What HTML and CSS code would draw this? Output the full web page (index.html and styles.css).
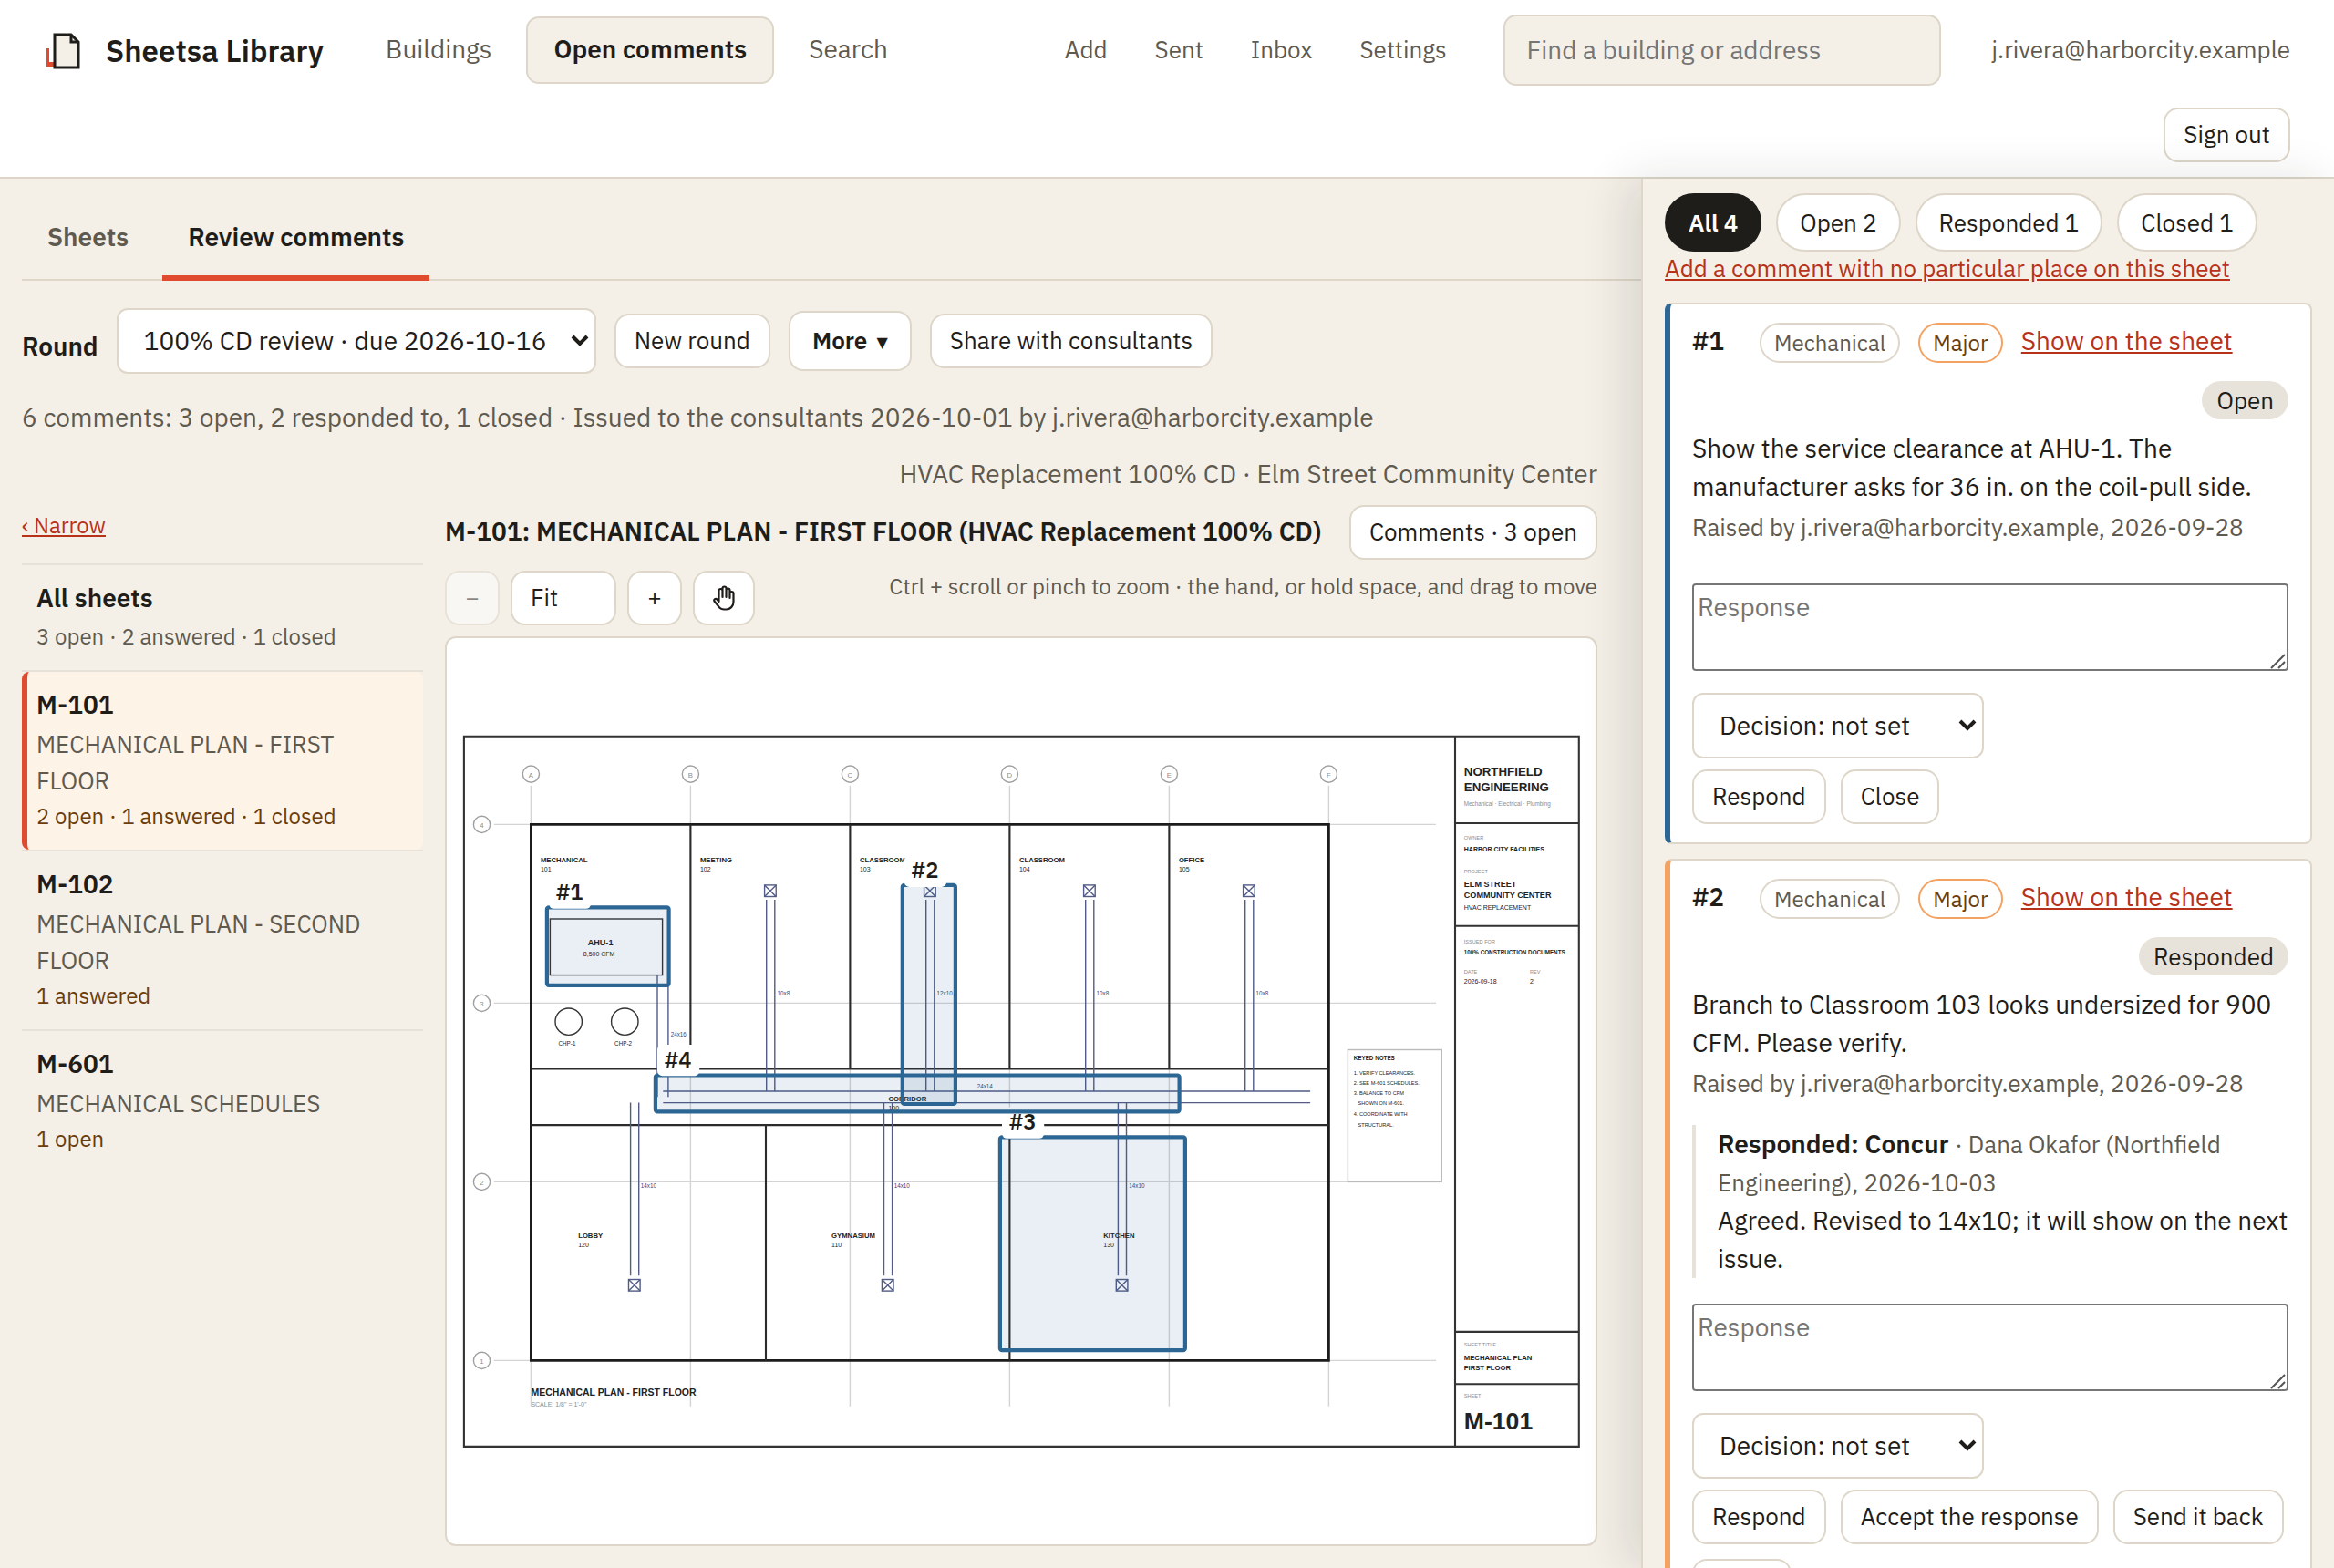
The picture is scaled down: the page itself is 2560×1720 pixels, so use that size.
FILE: index.html
```html
<!DOCTYPE html>
<html lang="en">
<head>
<meta charset="utf-8">
<title>Sheetsa Library</title>
<link rel="stylesheet" href="styles.css">
</head>
<body>
<header class="topbar">
  <a class="brand" href="#">
    <svg class="brand-mark" viewBox="0 0 40 44" width="40" height="44" aria-hidden="true">
      <path d="M3 19h10v20H3z" fill="#e04a2e"/><path d="M6 19h7v15H6z" fill="#fff"/>
      <path d="M12 4h18l8 8v28H12z" fill="#f4f0e8" stroke="#1f1d1a" stroke-width="3"/>
      <path d="M30 4v8h8" fill="none" stroke="#1f1d1a" stroke-width="3"/>
    </svg>
    Sheetsa Library
  </a>
  <nav class="nav" aria-label="Main">
    <a href="#">Buildings</a>
    <a href="#" class="current">Open comments</a>
    <a href="#">Search</a>
  </nav>
  <nav class="subnav" aria-label="Tools">
    <a href="#">Add</a><a href="#">Sent</a><a href="#">Inbox</a><a href="#">Settings</a>
  </nav>
  <input class="search" type="search" placeholder="Find a building or address" aria-label="Find a building or address">
  <div class="account">
    <span class="email">j.rivera@harborcity.example</span>
    <button class="btn">Sign out</button>
  </div>
</header>

<div class="page">
  <main class="main">
    <nav class="tabs" aria-label="Sections">
      <a href="#">Sheets</a>
      <a href="#" class="current">Review comments</a>
    </nav>
    <div class="round">
      <label for="round">Round</label>
      <select id="round" class="select round-select"><option>100% CD review · due 2026-10-16</option></select>
      <button class="btn">New round</button>
      <button class="btn more">More <span class="tri">▼</span></button>
      <button class="btn">Share with consultants</button>
    </div>
    <p class="status">6 comments: 3 open, 2 responded to, 1 closed · Issued to the consultants 2026-10-01 by j.rivera@harborcity.example</p>
    <p class="project">HVAC Replacement 100% CD · Elm Street Community Center</p>
    <div class="work">
      <aside class="sheets">
        <a class="narrow" href="#">‹ Narrow</a>
        <ul class="sheet-list">
          <li><a href="#"><b>All sheets</b><small class="muted">3 open · 2 answered · 1 closed</small></a></li>
          <li><a href="#" class="active"><b>M-101</b><span>MECHANICAL PLAN - FIRST FLOOR</span><small>2 open · 1 answered · 1 closed</small></a></li>
          <li><a href="#"><b>M-102</b><span>MECHANICAL PLAN - SECOND FLOOR</span><small>1 answered</small></a></li>
          <li><a href="#"><b>M-601</b><span>MECHANICAL SCHEDULES</span><small>1 open</small></a></li>
        </ul>
      </aside>
      <section class="viewer">
        <div class="viewer-head">
          <h1>M-101: MECHANICAL PLAN - FIRST FLOOR (HVAC Replacement 100% CD)</h1>
          <button class="btn">Comments · 3 open</button>
        </div>
        <div class="tools">
          <button class="btn square" disabled aria-label="Zoom out">−</button>
          <button class="btn fit">Fit</button>
          <button class="btn square" aria-label="Zoom in">+</button>
          <button class="btn hand" aria-label="Move the sheet">
            <svg viewBox="0 0 24 28" width="24" height="28" fill="none" stroke="currentColor" stroke-width="2.200" stroke-linecap="round" stroke-linejoin="round"><path d="M6.500 15V6a2 2 0 0 1 4 0V13M10.500 13V3.500a2 2 0 0 1 4 0V13M14.500 13V5.500a2 2 0 0 1 4 0V14M18.500 11V9a2 2 0 0 1 4 0V18c0 5-3.500 8.500-8 8.500h-2c-3 0-5-1-6.500-3.500L1.500 17.500c-1-2 1.500-3.500 3-2L6.500 18V6"/></svg>
          </button>
          <p class="hint">Ctrl + scroll or pinch to zoom · the hand, or hold space, and drag to move</p>
        </div>
        <div class="canvas">
          <svg class="plan" viewBox="0 0 1800 1420" role="img" aria-label="Mechanical plan, first floor">
            <defs>
              <g id="diffuser"><rect x="-9" y="-9" width="18" height="18"/><path d="M-9-9L9 9M9-9L-9 9"/></g>
            </defs>
            <g class="frame">
              <path d="M27 154H1774V1267H27zM1580 154V1267M1580 290H1774M1580 451H1774M1580 1087H1774M1580 1169H1774"/>
            </g>
            <g class="grid">
              <path d="M132 231V1204M382 231V1204M632 231V1204M882 231V1204M1132 231V1204M1382 231V1204M74 292H1550M74 572H1550M74 852H1550M74 1132H1550"/>
              <g class="bubble">
                <circle cx="132" cy="213" r="13"/><circle cx="382" cy="213" r="13"/><circle cx="632" cy="213" r="13"/><circle cx="882" cy="213" r="13"/><circle cx="1132" cy="213" r="13"/><circle cx="1382" cy="213" r="13"/>
                <circle cx="55" cy="292" r="13"/><circle cx="55" cy="572" r="13"/><circle cx="55" cy="852" r="13"/><circle cx="55" cy="1132" r="13"/>
              </g>
            </g>
            <g class="t11 soft mid">
              <text x="132" y="218">A</text><text x="382" y="218">B</text><text x="632" y="218">C</text><text x="882" y="218">D</text><text x="1132" y="218">E</text><text x="1382" y="218">F</text>
              <text x="55" y="297">4</text><text x="55" y="577">3</text><text x="55" y="857">2</text><text x="55" y="1137">1</text>
            </g>
            <path class="shell" d="M132 292H1382V1132H132z"/>
            <path class="wall" d="M382 292V675M632 292V675M882 292V675M1132 292V675M132 675H1382M132 763H1382M500 763V1132M882 763V1132"/>
            <g class="keybox"><rect x="1412" y="645" width="147" height="207"/></g>
            <g class="equip"><rect x="162" y="440" width="176" height="88"/><circle cx="191" cy="601" r="21"/><circle cx="279" cy="601" r="21"/></g>
            <g class="duct">
              <path d="M330 528V719M347 528V719M339 710H1353M339 728H1353M501 410V710M514 410V710M751 410V710M764 410V710M1001 410V710M1014 410V710M1251 410V710M1264 410V710M288 728V999M301 728V999M685 728V999M698 728V999M1052 728V999M1065 728V999"/>
              <use href="#diffuser" x="507" y="396"/><use href="#diffuser" x="757" y="396"/><use href="#diffuser" x="1007" y="396"/><use href="#diffuser" x="1257" y="396"/>
              <use href="#diffuser" x="294" y="1014"/><use href="#diffuser" x="691" y="1014"/><use href="#diffuser" x="1058" y="1014"/>
            </g>
            <g class="t9 navy">
              <text x="518" y="560">10x8</text><text x="768" y="560">12x10</text><text x="1018" y="560">10x8</text><text x="1268" y="560">10x8</text>
              <text x="831" y="706">24x14</text><text x="351" y="624">24x16</text>
              <text x="304" y="862">14x10</text><text x="701" y="862">14x10</text><text x="1069" y="862">14x10</text>
            </g>
            <g class="t11 bold">
              <text x="147" y="352">MECHANICAL</text><text x="397" y="352">MEETING</text><text x="647" y="352">CLASSROOM</text><text x="897" y="352">CLASSROOM</text><text x="1147" y="352">OFFICE</text>
              <text x="692" y="725">CORRIDOR</text><text x="206" y="940">LOBBY</text><text x="603" y="940">GYMNASIUM</text><text x="1029" y="940">KITCHEN</text>
              <text x="1594" y="1131">MECHANICAL PLAN</text><text x="1594" y="1147">FIRST FLOOR</text>
            </g>
            <g class="t10">
              <text x="147" y="366">101</text><text x="397" y="366">102</text><text x="647" y="366">103</text><text x="897" y="366">104</text><text x="1147" y="366">105</text>
              <text x="692" y="740">100</text><text x="206" y="954">120</text><text x="603" y="954">110</text><text x="1029" y="954">130</text>
              <text x="214" y="499">8,500 CFM</text><text x="1594" y="425">HVAC REPLACEMENT</text><text x="1594" y="541">2026-09-18</text><text x="1697" y="541">2</text>
              <text class="soft" x="132" y="1204">SCALE: 1/8" = 1'-0"</text>
            </g>
            <g class="t10 bold"><text x="1594" y="334">HARBOR CITY FACILITIES</text></g>
            <g class="t9"><text x="175" y="639">CHP-1</text><text x="263" y="639">CHP-2</text></g>
            <g class="t9 soft"><text x="1594" y="263">Mechanical · Electrical · Plumbing</text></g>
            <g class="t9 bold"><text x="1594" y="496">100% CONSTRUCTION DOCUMENTS</text><text x="1421" y="662">KEYED NOTES</text></g>
            <g class="t13 bold"><text x="221" y="481">AHU-1</text><text x="1594" y="390">ELM STREET</text><text x="1594" y="407">COMMUNITY CENTER</text></g>
            <g class="t8 soft"><text x="1594" y="316">OWNER</text><text x="1594" y="369">PROJECT</text><text x="1594" y="478">ISSUED FOR</text><text x="1594" y="525">DATE</text><text x="1697" y="525">REV</text><text x="1594" y="1110">SHEET TITLE</text><text x="1594" y="1190">SHEET</text></g>
            <g class="t8">
              <text x="1421" y="684">1. VERIFY CLEARANCES.</text><text x="1421" y="700">2. SEE M-601 SCHEDULES.</text><text x="1421" y="716">3. BALANCE TO CFM</text><text x="1428" y="732">SHOWN ON M-601.</text><text x="1421" y="749">4. COORDINATE WITH</text><text x="1428" y="765">STRUCTURAL.</text>
            </g>
            <g class="t15 bold"><text x="132" y="1187">MECHANICAL PLAN - FIRST FLOOR</text></g>
            <g class="t19 bold"><text x="1594" y="216">NORTHFIELD</text><text x="1594" y="240">ENGINEERING</text></g>
            <g class="t38 bold"><text x="1594" y="1240">M-101</text></g>
            <g class="mark"><rect class="area" x="157" y="422" width="191" height="122" rx="3"/><rect class="tag" x="160" y="375" width="66" height="49" rx="8"/><text x="171" y="410">#1</text></g>
            <g class="mark"><rect class="area" x="714" y="387" width="83" height="343" rx="3"/><rect class="tag" x="717" y="341" width="66" height="49" rx="8"/><text x="728" y="376">#2</text></g>
            <g class="mark"><rect class="area" x="867" y="782" width="290" height="334" rx="3"/><rect class="tag" x="870" y="735" width="66" height="49" rx="8"/><text x="881" y="770">#3</text></g>
            <g class="mark"><rect class="area" x="327" y="685" width="821" height="57" rx="3"/><rect class="tag" x="330" y="637" width="66" height="49" rx="8"/><text x="341" y="673">#4</text></g>
          </svg>
        </div>
      </section>
    </div>
  </main>

  <aside class="panel" aria-label="Comments">
    <div class="chips">
      <button class="chip on">All 4</button><button class="chip">Open 2</button><button class="chip">Responded 1</button><button class="chip">Closed 1</button>
    </div>
    <a class="add" href="#">Add a comment with no particular place on this sheet</a>
    <article class="card open">
      <div class="card-head"><b>#1</b><span class="pill">Mechanical</span><span class="pill major">Major</span><a href="#">Show on the sheet</a></div>
      <span class="state">Open</span>
      <p class="text">Show the service clearance at AHU-1. The manufacturer asks for 36 in. on the coil-pull side.</p>
      <p class="by">Raised by j.rivera@harborcity.example, 2026-09-28</p>
      <textarea placeholder="Response" aria-label="Response to #1"></textarea>
      <select class="select" aria-label="Decision for #1"><option>Decision: not set</option></select>
      <div class="actions"><button class="btn">Respond</button><button class="btn">Close</button></div>
    </article>
    <article class="card responded">
      <div class="card-head"><b>#2</b><span class="pill">Mechanical</span><span class="pill major">Major</span><a href="#">Show on the sheet</a></div>
      <span class="state">Responded</span>
      <p class="text">Branch to Classroom 103 looks undersized for 900 CFM. Please verify.</p>
      <p class="by">Raised by j.rivera@harborcity.example, 2026-09-28</p>
      <blockquote><b>Responded: Concur</b> <span>· Dana Okafor (Northfield Engineering), 2026-10-03</span><br>Agreed. Revised to 14x10; it will show on the next issue.</blockquote>
      <textarea placeholder="Response" aria-label="Response to #2"></textarea>
      <select class="select" aria-label="Decision for #2"><option>Decision: not set</option></select>
      <div class="actions"><button class="btn">Respond</button><button class="btn">Accept the response</button><button class="btn">Send it back</button><button class="btn">Close</button></div>
    </article>
  </aside>
</div>
</body>
</html>
```
FILE: styles.css
```css
:root {
  --ink: #1f1d1a;
  --muted: #5f5a50;
  --paper: #f4f0e8;
  --line: #ddd6c9;
  --red: #b8321a;
  --accent: #e04a2e;
  --blue: #2c6694;
  --orange: #f4a261;
  --brown: #6b3d0c;
}
* { box-sizing: border-box; }
html, body { height: 100%; }
body {
  margin: 0;
  display: flex;
  flex-direction: column;
  overflow: hidden;
  background: var(--paper);
  color: var(--ink);
  font: 28px/42px "IBM Plex Sans", Roboto, "Noto Sans", sans-serif;
}
p, h1, ul, blockquote { margin: 0; padding: 0; }
b, h1, label { font-weight: 600; }
a { color: var(--red); }
button, input, select, textarea { font: inherit; color: inherit; }

.topbar {
  display: flex;
  flex: none;
  align-items: flex-start;
  padding: 16px 48px;
  background: #fff;
  border-bottom: 2px solid var(--line);
}
.topbar a { color: var(--muted); text-decoration: none; }
.topbar .brand {
  display: flex;
  align-items: center;
  gap: 28px;
  height: 80px;
  margin-right: 38px;
  color: var(--ink);
  font-size: 33px;
  font-weight: 600;
}
.nav { display: flex; gap: 8px; padding-top: 2px; }
.nav a { padding: 13px 28px 15px; border: 2px solid transparent; border-radius: 14px; }
.nav .current { color: var(--ink); font-weight: 600; background: var(--paper); border-color: var(--line); }
.subnav { display: flex; gap: 52px; margin: 17px 62px 0 auto; font-size: 26px; }
.search {
  width: 480px;
  height: 78px;
  padding: 0 24px 2px;
  background: var(--paper);
  border: 2px solid var(--line);
  border-radius: 14px;
}
.search::placeholder, textarea::placeholder { color: #757575; }
.account { display: flex; flex-direction: column; align-items: flex-end; gap: 26px; margin-left: 56px; font-size: 26px; }
.email { color: var(--muted); line-height: 76px; }

.btn {
  height: 60px;
  padding: 0 20px 3px;
  background: #fff;
  border: 2px solid var(--line);
  border-radius: 16px;
  font-size: 26px;
  line-height: 40px;
  white-space: nowrap;
}
.btn:disabled { opacity: .5; }
.select {
  display: block;
  width: 320px;
  height: 72px;
  padding: 0 0 1px 28px;
  appearance: none;
  background: #fff url("data:image/svg+xml,%3Csvg xmlns='http://www.w3.org/2000/svg' width='20' height='14' fill='none' stroke='%231f1d1a' stroke-width='4'%3E%3Cpath d='M2 2l8 8 8-8'/%3E%3C/svg%3E") no-repeat right 6px center;
  border: 2px solid var(--line);
  border-radius: 12px;
}

.page { display: flex; flex: 1; min-height: 0; }
.main { display: flex; flex: 1; flex-direction: column; min-width: 0; padding-left: 24px; }
.tabs { display: flex; gap: 9px; padding-top: 22px; border-bottom: 2px solid var(--line); }
.tabs a { padding: 21px 28px; margin-bottom: -2px; border-bottom: 6px solid transparent; color: var(--muted); font-weight: 600; text-decoration: none; }
.tabs .current { color: var(--ink); border-color: var(--accent); }
.round { display: flex; align-items: center; gap: 20px; padding-top: 30px; }
.round label { padding-top: 12px; }
.round-select { width: 526px; }
.more { height: 66px; padding: 0 24px 3px; font-weight: 600; }
.tri { margin-left: 4px; font-family: "DejaVu Sans", sans-serif; font-size: 16px; line-height: 20px; vertical-align: 2px; }
.status { padding-top: 27px; color: var(--muted); }
.project { padding: 20px 48px 0 0; color: var(--muted); text-align: right; }

.work { display: flex; flex: 1; gap: 24px; min-height: 0; padding: 13px 48px 24px 0; }
.sheets { flex: none; width: 440px; padding-top: 4px; font-size: 24px; line-height: 36px; }
.sheet-list { margin-top: 24px; list-style: none; }
.sheet-list li { border-top: 2px solid #e6e2da; }
.sheet-list a { display: flex; flex-direction: column; padding: 13px 16px 18px; color: var(--ink); text-decoration: none; }
.sheet-list b { font-size: 28px; line-height: 46px; }
.sheet-list span { font-size: 26px; line-height: 40px; color: var(--muted); }
.sheet-list small { font-size: 24px; line-height: 38px; color: var(--brown); }
.sheet-list .muted { color: var(--muted); }
.sheet-list .active { padding-left: 10px; background: #fef3e7; border-left: 6px solid var(--accent); border-radius: 8px; }

.viewer { display: flex; flex: 1; flex-direction: column; gap: 12px; min-width: 0; }
.viewer-head { display: flex; justify-content: space-between; align-items: center; }
.viewer h1 { padding-bottom: 3px; font-size: 28px; white-space: nowrap; }
.tools { display: flex; gap: 12px; }
.square { width: 60px; padding: 0 0 3px; }
.fit { width: 116px; text-align: left; }
.hand { display: grid; place-items: center; width: 68px; padding: 0; }
.hint { margin-left: auto; font-size: 24px; line-height: 34px; color: var(--muted); }
.canvas { display: flex; flex: 1; min-height: 0; background: #fff; border: 2px solid var(--line); border-radius: 12px; overflow: hidden; }
.plan { width: 100%; height: 100%; font-family: "Liberation Sans", sans-serif; fill: #222; }
.plan path, .plan .grid circle, .plan .equip *, .plan .keybox rect, #diffuser rect { fill: none; }
.frame { stroke: #333; stroke-width: 3; }
.grid { stroke: #d4d4d4; stroke-width: 2; }
.bubble { stroke: #a0a0a0; }
.shell { stroke: #1c1c1c; stroke-width: 4; }
.wall { stroke: #2b2b2b; stroke-width: 3; }
.keybox { stroke: #bbb; stroke-width: 2; }
.equip { stroke: #333; stroke-width: 2; }
.duct { stroke: #525c86; stroke-width: 2; }
.navy { fill: #3a4678; }
.soft { fill: #8c8c8c; }
.mid { text-anchor: middle; }
.bold { font-weight: 700; }
.t8 { font-size: 8px; }
.t9 { font-size: 9px; }
.t10 { font-size: 10px; }
.t11 { font-size: 11px; }
.t13 { font-size: 13px; }
.t15 { font-size: 15px; }
.t19 { font-size: 19px; }
.t38 { font-size: 38px; }
.area { fill: rgb(44 102 148 / 10%); stroke: var(--blue); stroke-width: 6; }
.tag { fill: #fff; }
.mark text { font: 600 34px "IBM Plex Sans", Roboto, sans-serif; fill: var(--ink); }

.panel {
  flex: none;
  width: 760px;
  padding: 16px 24px 0;
  background: var(--paper);
  border-left: 2px solid var(--line);
  box-shadow: -16px 0 48px rgb(31 29 26 / 12%);
  overflow: hidden;
  clip-path: inset(-60px 0 0 -80px);
}
.chips { display: flex; gap: 16px; }
.chip { height: 64px; padding: 0 24px; background: #fff; border: 2px solid var(--line); border-radius: 32px; font-size: 26px; }
.chip.on { background: var(--ink); border-color: var(--ink); color: #fff; font-weight: 600; }
.add { display: block; padding-bottom: 4px; font-size: 26px; line-height: 36px; }
.card { display: flex; flex-direction: column; align-items: flex-start; margin-top: 16px; padding: 20px 24px; background: #fff; border: 2px solid var(--line); border-left-width: 6px; border-radius: 8px; }
.card.open { border-left-color: var(--blue); }
.card.responded { border-left-color: var(--orange); }
.card-head { display: flex; align-items: center; gap: 20px; height: 44px; }
.card-head b { width: 54px; }
.card-head b, .card-head a { padding-bottom: 4px; }
.pill { padding: 0 14px; height: 44px; border: 2px solid var(--line); border-radius: 22px; color: var(--muted); font-size: 24px; line-height: 40px; }
.pill.major { border-color: var(--orange); color: var(--brown); }
.state { align-self: flex-end; margin: 20px 0 11px; padding: 0 16px; border-radius: 22px; background: #e8e3da; font-size: 26px; line-height: 42px; }
.by { padding-top: 3px; font-size: 26px; line-height: 40px; color: var(--muted); }
blockquote { margin-top: 26px; padding-left: 24px; border-left: 4px solid #e6e2da; }
blockquote span { font-size: 26px; color: var(--muted); }
textarea {
  width: 100%;
  height: 96px;
  margin: 28px 0 24px;
  padding: 3px 4px;
  background: #fff url("data:image/svg+xml,%3Csvg xmlns='http://www.w3.org/2000/svg' width='18' height='18' stroke='%23555' stroke-width='2'%3E%3Cpath d='M1 17L16 2M9 17l7-7'/%3E%3C/svg%3E") no-repeat right bottom;
  border: 2px solid #767676;
  border-radius: 4px;
}
textarea::-webkit-resizer { display: none; }
.by + textarea { margin-top: 42px; }
.actions { display: flex; flex-wrap: wrap; gap: 16px; margin-top: 12px; }
```
